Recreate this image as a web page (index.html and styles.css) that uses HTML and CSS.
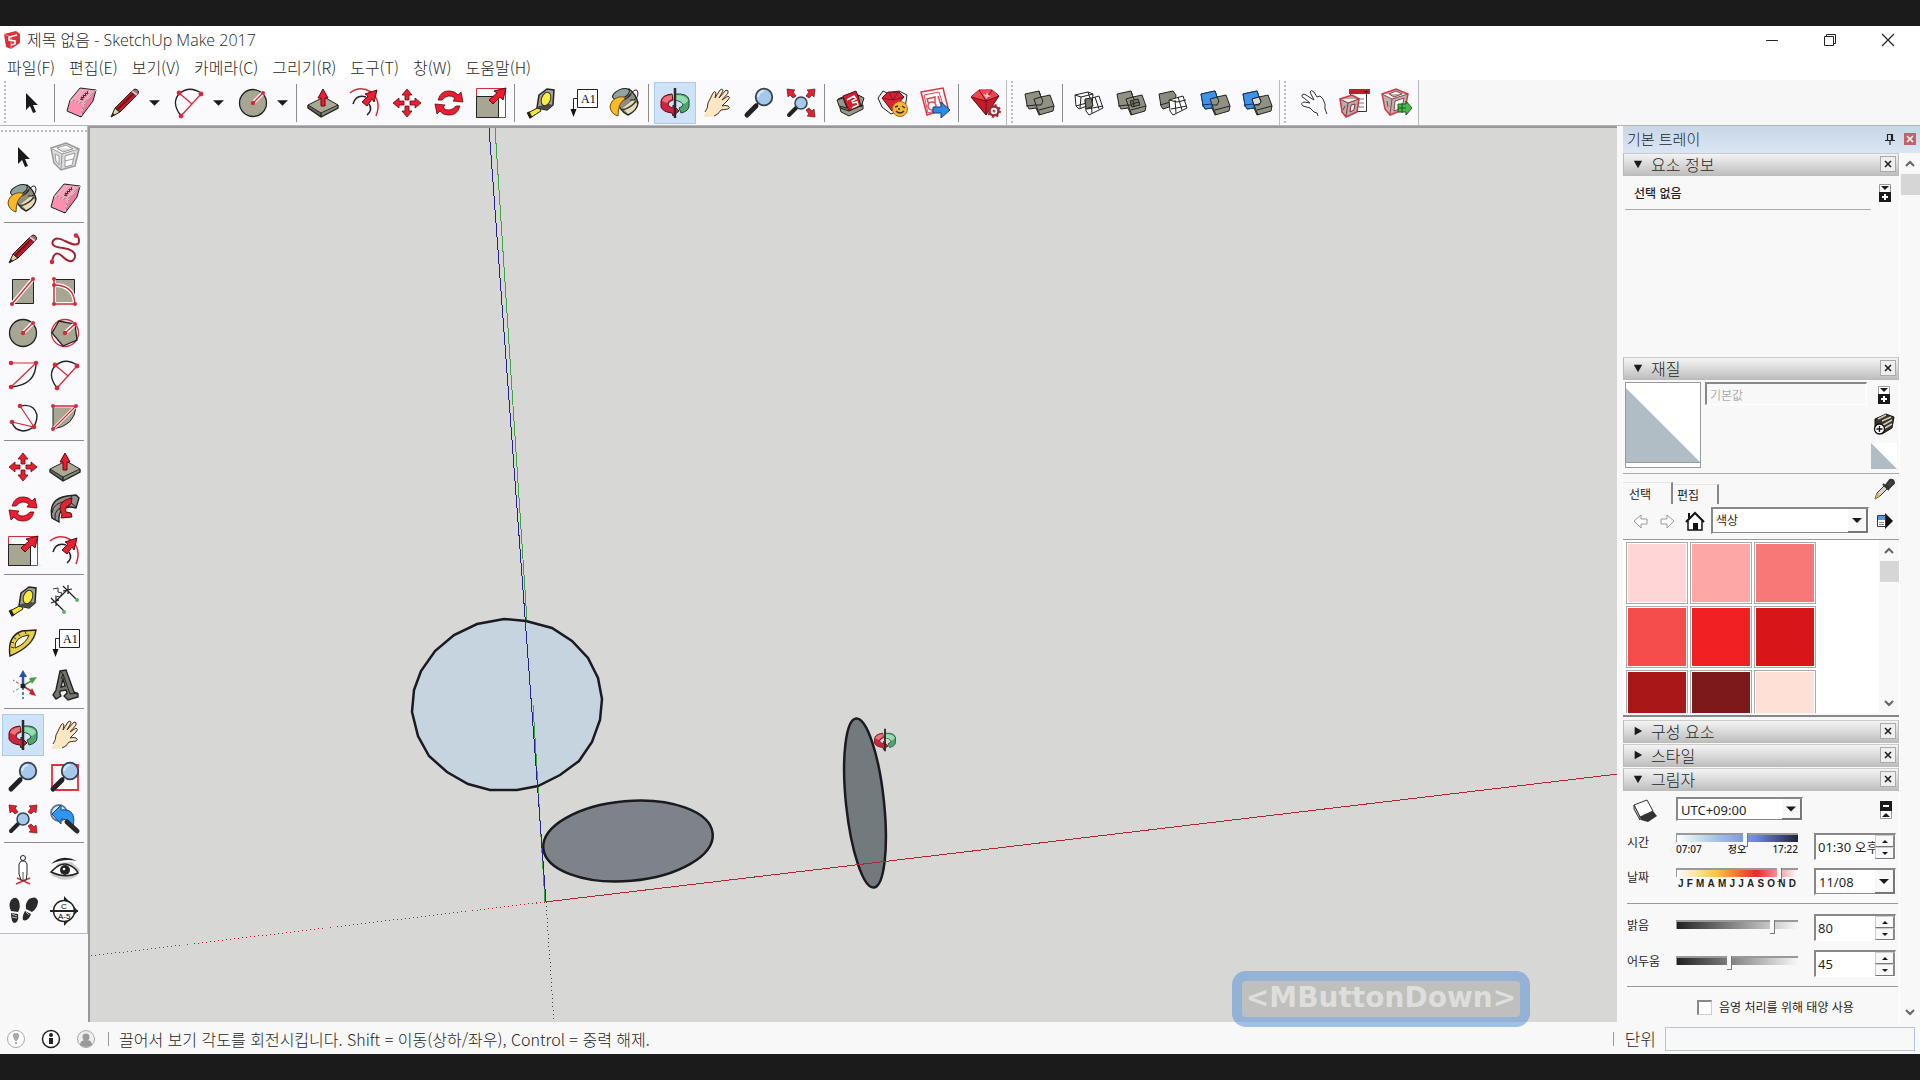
FILE: index.html
```html
<!DOCTYPE html>
<html lang="ko">
    <head>
        <meta charset="UTF-8" />
        <meta name="viewport" content="width=device-width, initial-scale=1.0" />
        <title>제목 없음 - SketchUp Make 2017</title>
        <link rel="stylesheet" href="styles.css">
    </head>
    <body>
        <!-- icons, all on a 32x32 grid -->
        <svg class="sprite" aria-hidden="true">
            <symbol id="select" viewBox="0 0 32 32"><path d="M11 6v17l4-4 3 7 3-1-3-7h5z" fill="#1a1a1a"/></symbol>
            <symbol id="eraser" viewBox="0 0 32 32">
                <g stroke="#222" stroke-linejoin="round"><path d="M15 1l16 2-12 14-14-4z" fill="#f4a6bd"/><path d="M5 13l14 4-3 13-14-6z" fill="#ff8fb0"/><path d="M31 3l-3 11-12 16 3-13z" fill="#f07a9c"/></g>
                <path d="M5 13l14 4 12-14M19 17l-3 12" stroke="#ffd9e4" fill="none"/>
                <path d="M15 12l3 1-2-3 3 1-1-3 3 1-1-3 3 1-1-3" stroke="#4a2030" fill="none"/>
            </symbol>
            <symbol id="pencil" viewBox="0 0 32 32">
                <path d="M2 30l4-9 5 4z" fill="#e3cf9d" stroke="#222"/><path d="M2 30l2-4 2 2z" fill="#222"/>
                <path d="M6 21L23 4l5 4-17 17z" fill="#c4202c" stroke="#222"/><path d="M8 23L25 6" stroke="#7a1018" stroke-width="2"/>
                <path d="M23 4l3-2q5 1 3 5l-1 1z" fill="#b06468" stroke="#222"/><path d="M23 4l5 4" stroke="#ccc" stroke-width="2"/>
            </symbol>
            <symbol id="arc" viewBox="0 0 32 32">
                <path d="M8 29Q-2 16 6 7q10-9 22-1" fill="none" stroke="#222" stroke-width="1.3"/>
                <path d="M8 29L28 7M6 6l13 11" stroke="#d32b3c" stroke-width="1.3"/>
                <g fill="#d32b3c"><circle cx="8" cy="29" r="2.4"/><circle cx="28" cy="7" r="2.4"/><circle cx="6" cy="6" r="2.4"/></g>
            </symbol>
            <symbol id="circle" viewBox="0 0 32 32">
                <circle cx="16" cy="16" r="13.5" fill="#a7a692" stroke="#222" stroke-width="1.3"/><path d="M16 16l10-10" stroke="#fff" stroke-width="4"/><path d="M16 16l10-10" stroke="#d32b3c" stroke-width="1.5"/>
                <g fill="#d32b3c"><circle cx="16" cy="16" r="2.2"/><circle cx="26" cy="6" r="2"/></g>
            </symbol>
            <symbol id="push" viewBox="0 0 32 32">
                <path d="M1 18l13 8v4L1 21z" fill="#66665a"/><path d="M31 18l-17 8v4l17-9z" fill="#89897a"/>
                <path d="M1 18v3l13 9 17-9v-3M14 26v4" fill="none" stroke="#222" stroke-width="1.400"/><path d="M1 18l16-8 14 8-17 8z" fill="#aaaa94" stroke="#222"/>
                <path d="M14 19v-8h-3l5-9 5 9h-3v8z" fill="#ed1c2e" stroke="#5a0c14"/>
            </symbol>
            <symbol id="offset" viewBox="0 0 32 32">
                <path d="M1 6Q11-2 22 5q11 9 5 24" fill="none" stroke="#d32b3c" stroke-width="1.5"/><path d="M4 17q3-10 13-7M20 17q4 6-2 11" fill="none" stroke="#222" stroke-width="1.5"/>
                <path d="M13 15l6-6-3-2 12-4-3 12-2-3-5 7z" fill="#ed1c2e" stroke="#5a0c14"/>
            </symbol>
            <symbol id="move" viewBox="0 0 32 32"><path d="M16 2l5 6h-3v5h-4V8h-3zM16 30l5-6h-3v-5h-4v5h-3zM2 16l6-5v3h5v4H8v3zM30 16l-6-5v3h-5v4h5v3z" fill="#ed1c2e" stroke="#5a0c14" stroke-width=".8"/></symbol>
            <symbol id="rotate" viewBox="0 0 32 32">
                <path id="half-turn" d="M5 13Q8 3 17 4q5 0 8 4l3-3 2 10-10-1 2-3q-7-5-13 2z" fill="#ed1c2e" stroke="#5a0c14" stroke-width=".8"/>
                <use href="#half-turn" transform="rotate(180 16 16)"/>
            </symbol>
            <symbol id="scale" viewBox="0 0 32 32">
                <path d="M1.500 1.500h29v29h-29z" fill="none" stroke="#d32b3c"/><path d="M1.500 9.500h22v21h-22z" fill="#a7a692" stroke="#222"/>
                <path d="M14 13l8-7-3-2 12-3-3 12-3-3-7 7z" fill="#ed1c2e" stroke="#5a0c14"/>
            </symbol>
            <symbol id="tape" viewBox="0 0 32 32">
                <path d="M3 26l11-6 2 4-11 7z" fill="#f3e43a" stroke="#222"/><path d="M3 25l3 6" stroke="#222" stroke-width="3"/>
                <path d="M14 8l8-6 7 1-1 15-6 5-10-2z" fill="#a3a39a" stroke="#222" stroke-width="1.5"/><path d="M12 21l10 2 6-5-4-1-10 2z" fill="#4d4d48"/>
                <ellipse cx="21" cy="12" rx="4.500" ry="7" fill="#f8ee3d" stroke="#333" transform="rotate(20 21 12)"/>
            </symbol>
            <symbol id="text" viewBox="0 0 32 32">
                <path d="M10.500 2.500h20v18h-20zM10 11.500H6.500V23" fill="#fff" stroke="#222"/><path d="M3.500 22h6l-3 8z" fill="#111"/>
                <text x="14" y="16" class="icon-text">A1</text>
            </symbol>
            <symbol id="bucket" viewBox="0 0 32 32">
                <path d="M5 9L20 2q7 5 9 14-1 8-10 12-8-3-14-19z" fill="#8f8d80" stroke="#222" stroke-width="1.400"/><path d="M14 21l10-8 4 4q-1 6-9 10z" fill="#e7dcb6"/>
                <path d="M10 14q8-1 12-7M13 23q9-2 14-9" stroke="#3c3c38" stroke-width="1.500" fill="none"/><ellipse cx="12" cy="7" rx="9" ry="4.500" transform="rotate(-24 12 7)" fill="#8fa3a0" stroke="#222"/>
                <path d="M19 10Q28-2 29 6q0 8-8 7" fill="none" stroke="#222"/><path d="M1 20q1-8 9-10 6-1 6 2-7 4-7 17-7-2-8-9z" fill="#fbb829" stroke="#6b4b10"/>
            </symbol>
            <symbol id="orbit" viewBox="0 0 32 32">
                <path d="M16 7q13-1 14 6v6q0 5-8 7l-2-5q4-1 4-4-2-3-8-4z" fill="#4fa66d" stroke="#1d4a2c"/><path d="M16 8q11 0 13 5-1 3-5 4-2-4-8-4z" fill="#96dcb0"/>
                <path d="M13 7Q3 8 2 14v6q2 5 11 6l1 3 6-5-6-6v3q-5-1-5-4 1-3 5-4z" fill="#d0243c" stroke="#5a0c14"/><path d="M13 8Q4 9 3 14l5 2q1-3 5-4z" fill="#e8747a"/>
                <path d="M16 1v30" stroke="#2a2a2a" stroke-width="2.500"/>
            </symbol>
            <symbol id="pan" viewBox="0 0 32 32">
                <path d="M2 30q5-7 5-14L12 6q2-3 3 0l-1 5 5-8q3-2 3 1l-4 7 7-8q3 0 2 3l-6 7 6-4q3 1 0 4l-6 6q3-1 6 0 3 2 0 3l-7 1q-4 6-12 7z" fill="#fde6c4"/>
                <path d="M4 25q3-4 3-9L12 6q2-3 3 0l-1 5 5-8q3-2 3 1l-4 7 7-8q3 0 2 3l-6 7 6-4q3 1 0 4l-6 6q3-1 6 0 3 2 0 3l-7 1q-3 5-7 6" fill="none" stroke="#3d3122"/>
            </symbol>
            <symbol id="zoom" viewBox="0 0 32 32">
                <path d="M4 28l9-9" stroke="#222" stroke-width="5" stroke-linecap="round"/><path d="M13 19l3-4" stroke="#222" stroke-width="2"/>
                <circle cx="21" cy="10" r="8.300" fill="#a6c8ea" stroke="#37424f" stroke-width="1.800"/><path d="M15 10q1-6 6-6" stroke="#d8e9f8" fill="none" stroke-width="2"/>
            </symbol>
            <symbol id="extents" viewBox="0 0 32 32">
                <path d="M4 28l7-7" stroke="#222" stroke-width="4" stroke-linecap="round"/><circle cx="16" cy="16" r="6" fill="#a6c8ea" stroke="#37424f" stroke-width="1.500"/>
                <path d="M2 2l8 1-2 2 3 4-3 2-3-3-2 2zM30 2l-8 1 2 2-3 4 3 2 3-3 2 2zM30 30l-8-1 2-2-3-4 3-2 3 3 2-2z" fill="#e4202f" stroke="#6a1018" stroke-width=".7"/>
            </symbol>
            <symbol id="warehouse" viewBox="0 0 32 32">
                <path d="M3 12l14-6 10 4v12l-14 6-8-7z" fill="#77736b" stroke="#222"/><path d="M8 9l13-5 6 14-13 6z" fill="#d81e2e" stroke="#501018"/>
                <path d="M2 13l6-2 4 10-8-2zM23 8l6 3-3 9zM5 21l9 3 14-6v4l-14 7-8-4z" fill="#9a968b" stroke="#222"/>
                <path d="M12 13l7-4 2 3-4 2 1 2 4-1 1 3-6 3" fill="none" stroke="#fff" stroke-width="1.500"/>
            </symbol>
            <symbol id="gem" viewBox="0 0 32 32">
                <path d="M2 10l8-7h13l7 6-13 19z" fill="#c51b2b" stroke="#4e0a12"/><path d="M2 10l8-7h13l7 6-13 5z" fill="#ee4650"/><path d="M10 3l7 11 6-11M2 10l15 4 13-5M17 14v13" fill="none" stroke="#7b101b"/><path d="M14 7l3 1 1-3 1 3 3 1-3 1-1 2z" fill="#fcc"/>
            </symbol>
            <symbol id="gem-face" viewBox="0 0 32 32">
                <path d="M1 11L6 4l4 2L22 4l8 4-2 13-14 6-9-7z" fill="#eee" stroke="#222"/><path d="M5 11l6-6h11l5 5-12 14z" fill="#d42534" stroke="#501018"/><path d="M5 11l11 2 11-3M12 5l4 8 5-8" fill="none" stroke="#8b111e"/>
                <circle cx="23" cy="22" r="7.500" fill="#f7b733" stroke="#a56b10"/><path d="M18 20l3-1M25 19l3 2M19 24q4 4 8 0M22 21v2" stroke="#333" fill="none" stroke-width="1.500"/>
            </symbol>
            <symbol id="layout" viewBox="0 0 32 32">
                <path d="M2 5l22-4 5 20-21 7z" fill="#fff" stroke="#d83343" stroke-width="1.500"/><path d="M5 8l15-3 5 16-16 5z" fill="none" stroke="#dc4653"/><path d="M8 12l8-2v6l-6 2zM19 9l3 9" fill="none" stroke="#dc4653" stroke-width="1.500"/><circle cx="13" cy="19" r="4" fill="#fff" stroke="#dc4653" stroke-width="1.500"/>
                <path d="M14 20h8v-5l9 8-9 8v-5h-8z" fill="#2d8be6" stroke="#153e74"/>
            </symbol>
            <symbol id="gem-gear" viewBox="0 0 32 32">
                <use href="#gem"/><circle cx="25" cy="24" r="4.500" fill="#fff" stroke="#9d2b35" stroke-width="2.500"/><circle cx="25" cy="24" r="6" fill="none" stroke="#9d2b35" stroke-width="2" stroke-dasharray="2 2.700"/><circle cx="25" cy="24" r="1.500" fill="#b84b55"/>
            </symbol>
            <symbol id="shell" viewBox="0 0 32 32">
                <g fill="#919183" stroke="#222"><path d="M2 7l14-3 2 6 9-2 4 11-1 5-14 4-3-7-7 1-2-4z"/><path d="M16 4l2 6-7 2 2 6h5l2-4-2-4M3 19l10-1M13 18l4 10M16 23l15-4" fill="none"/></g>
            </symbol>
            <symbol id="intersect" viewBox="0 0 32 32">
                <g fill="none" stroke="#222"><path d="M2 8l13-3 4 12-13 5-3-3zM3 19l14-4M2 8l6 2 12-3M8 10l-1 11M15 5l5 2-1 11"/><path d="M12 13l14-4 4 12-14 7-3-4zM14 22l16-3M22 10l4 12M18 14l1 12"/><path d="M12 12l6-1 2 8-7 3z" fill="#77776b"/></g>
            </symbol>
            <symbol id="union" viewBox="0 0 32 32"><use href="#shell"/><path d="M15 14l8-2 2 6-8 2zM18 14l1 5M17 17l7-2" stroke="#222" fill="#77776b"/></symbol>
            <symbol id="subtract" viewBox="0 0 32 32">
                <g stroke="#222"><path d="M2 7l14-3 3 4-1 10-12 4-2-3z" fill="#8b8b7d"/><path d="M3 18l14-4" fill="none"/><path d="M12 13l14-4 4 12-14 7-3-4z" fill="#fff"/><path d="M14 22l16-3M21 10l4 13M18 13l1 13M12 13l8 2 9-2" fill="none"/></g>
            </symbol>
            <symbol id="trim" viewBox="0 0 32 32"><use href="#shell"/><path d="M2 7l14-3 2 6-7 2 2 6v3l-7 1-2-4z" fill="#3e92e8" stroke="#16365c"/><path d="M3 18l10-1" stroke="#16365c"/></symbol>
            <symbol id="split" viewBox="0 0 32 32"><use href="#trim"/><path d="M11 12l7-2 2 5-2 2-5 1z" fill="#ddd" stroke="#222"/></symbol>
            <symbol id="touch" viewBox="0 0 32 32"><path d="M6 8q2-2 4 0l8 5-4-8q1-3 4 0l3 5 3-1 3 3q3 5 2 10l2 5M6 8q-1 2 2 3l6 5-6-1q-4 1-1 4l7 2 4 4 3 1 1 3" fill="none" stroke="#333"/></symbol>
            <symbol id="component-menu" viewBox="0 0 32 32">
                <path d="M12.500 3.500h16v21h-16z" fill="#fff" stroke="#333"/><path d="M20 12h6M20 16h6M20 20h6" stroke="#777"/><path d="M11 2h21v5H11z" fill="#c31d2b"/><path d="M26 4h4l-2 2z" fill="#300"/>
                <path d="M2 12l12-4 7 4-2 13-11 5-4-5z" fill="#b5ada8" stroke="#c93443" stroke-width="1.500"/><path d="M2 12l8 4 11-4M10 16l-2 13M7 19l-2 4M13 18l4-1-1 6-4 2z" stroke="#8e2d38" fill="#eee"/>
            </symbol>
            <symbol id="component-go" viewBox="0 0 32 32">
                <path d="M2 7l14-5 12 5-3 15-15 6-5-6z" fill="#bcb3ae" stroke="#d13c4a" stroke-width="1.500"/><path d="M2 7l10 5 16-5M12 12l-2 15M7 14l1 6M9 7l7-3 6 3-8 3zM15 14l9-3-2 10-8 3z" stroke="#94404a" fill="#fff"/>
                <path d="M18 17h8v-3l6 7-6 7v-3h-8z" fill="#49b749" stroke="#1c5a20"/><path d="M22 16v10M18 21h8" stroke="#1c5a20"/>
            </symbol>
            <symbol id="component" viewBox="0 0 32 32">
                <path d="M2 7l15-5 13 6-4 17-14 4-7-7z" fill="#ddd" stroke="#999" stroke-width="1.500"/><path d="M2 7l11 6 17-5M13 13l-1 16M8 7l9-3 7 4-10 3zM6 13l4 2v9l-3-4zM16 15l10-3-3 12-7 2zM16 20l8-2" fill="#fff" stroke="#999"/>
            </symbol>
            <symbol id="freehand" viewBox="0 0 32 32"><path d="M3 29q2-13 10-6 10 10 13 1 1-7-12-9-13-1-10-7 3-5 12 0 14 7 14 0 0-5-3-5" fill="none" stroke="#a5202e" stroke-width="2"/><circle cx="3" cy="29" r="2.300" fill="#d32b3c"/><circle cx="27" cy="2.500" r="2.300" fill="#d32b3c"/></symbol>
            <symbol id="rect" viewBox="0 0 32 32"><path d="M5.500 4.500h21v24h-21z" fill="#a7a692" stroke="#222"/><path d="M5 29L26 4" stroke="#fff" stroke-width="4"/><path d="M5 29L26 4" stroke="#d32b3c" stroke-width="1.500"/><circle cx="5" cy="29" r="2" fill="#d32b3c"/><circle cx="26" cy="4" r="2" fill="#d32b3c"/></symbol>
            <symbol id="rot-rect" viewBox="0 0 32 32"><path d="M5.500 4.500h20v24h-20z" fill="#a7a692" stroke="#222"/><path d="M5 4v25h21Q25 10 5 10" fill="none" stroke="#fff" stroke-width="4"/><path d="M5 4v25h21Q25 10 5 10" fill="none" stroke="#d32b3c" stroke-width="1.500"/><g fill="#d32b3c"><circle cx="5" cy="4" r="2"/><circle cx="5" cy="10" r="2"/><circle cx="5" cy="29" r="2"/><circle cx="26" cy="29" r="2"/></g></symbol>
            <symbol id="polygon" viewBox="0 0 32 32"><circle cx="16" cy="16" r="13.500" fill="#fff" stroke="#d32b3c" stroke-width="1.300"/><path d="M10 4l16 3 2 16-14 6L3 16z" fill="#a7a692" stroke="#222" stroke-width="1.300"/><path d="M16 16l10-9" stroke="#fff" stroke-width="4"/><path d="M16 16l10-9" stroke="#d32b3c" stroke-width="1.500"/><circle cx="16" cy="16" r="2.200" fill="#d32b3c"/><circle cx="26" cy="7" r="2" fill="#d32b3c"/></symbol>
            <symbol id="arc2" viewBox="0 0 32 32"><path d="M4 28Q29 26 29 4" fill="none" stroke="#222" stroke-width="1.400"/><path d="M4 28L29 4H4" fill="none" stroke="#d32b3c" stroke-width="1.200"/><g fill="#d32b3c"><circle cx="4" cy="4" r="2.300"/><circle cx="29" cy="4" r="2.300"/><circle cx="4" cy="28" r="2.300"/></g></symbol>
            <symbol id="arc3" viewBox="0 0 32 32"><path d="M13 5q14-3 17 9 0 15-14 16-9-1-11-9" fill="none" stroke="#222" stroke-width="1.400"/><path d="M13 5l14 21-22-5" fill="none" stroke="#d32b3c" stroke-width="1.200"/><g fill="#d32b3c"><circle cx="13" cy="5" r="2.300"/><circle cx="5" cy="21" r="2.300"/><circle cx="27" cy="26" r="2.300"/></g></symbol>
            <symbol id="pie" viewBox="0 0 32 32"><path d="M4 28V5h23q-1 20-23 23z" fill="#a7a692" stroke="#222"/><path d="M4 28L27 5H4" stroke="#fff" stroke-width="3" fill="none"/><path d="M4 28L27 5H4" stroke="#d32b3c" stroke-width="1.300" fill="none"/><g fill="#d32b3c"><circle cx="4" cy="5" r="2"/><circle cx="27" cy="5" r="2"/><circle cx="4" cy="28" r="2"/></g></symbol>
            <symbol id="follow" viewBox="0 0 32 32">
                <path d="M10 29l-7-4Q-1 6 18 3l9-1 3 3-3 10-5-1q-13-1-12 15z" fill="#92928a" stroke="#222" stroke-width="1.400"/><path d="M3 20q1-11 17-12l3-5M6 27q-2-14 15-14M20 8l7 6" fill="none" stroke="#222"/>
                <path d="M23 5q-13 2-12 12l2 4-1 4 11-1-1-4-5-1q-2-5 5-8z" fill="#dc2632" stroke="#5a0c14"/>
            </symbol>
            <symbol id="dimension" viewBox="0 0 32 32"><path d="M6 17L18 5M2 13l13 13M14 1l13 13M2 18l8-3M14 6l9-2M7 12v9M19 0v9" stroke="#222" stroke-width="1.200"/><path d="M4 4l5-1 0 4 4 1-2 4-5-1" fill="none" stroke="#333"/><circle cx="15" cy="27" r="2" fill="#58b868"/><circle cx="28" cy="15" r="2" fill="#58b868"/></symbol>
            <symbol id="protractor" viewBox="0 0 32 32"><path d="M3 29Q0 9 15 4l14-1Q27 19 3 29z" fill="#e8cf4b" stroke="#222" stroke-width="1.400"/><path d="M8 21Q7 10 22 8q-3 9-14 13z" fill="#fbf6df" stroke="#222"/><path d="M4 20l3 1M4 15l3 1M6 10l3 2M11 6l2 3M18 4l1 3" stroke="#333"/></symbol>
            <symbol id="axes" viewBox="0 0 32 32"><path d="M16 17V6" stroke="#2455a4" stroke-width="2.500"/><path d="M12 8l4-7 4 7z" fill="#2455a4"/><path d="M16 17l8-5" stroke="#4a9e4a" stroke-width="1.500"/><path d="M22 9l8-1-5 7z" fill="#4a9e4a"/><path d="M16 17l8 5" stroke="#c22330" stroke-width="1.500"/><path d="M22 25l7 2-4-8z" fill="#c22330"/><path d="M16 18v12" stroke="#2455a4" stroke-width="1.500" stroke-dasharray="3 2"/><path d="M16 17L6 11" stroke="#c22330" stroke-dasharray="3 2"/><path d="M16 17L6 23" stroke="#4a9e4a" stroke-dasharray="3 2"/><circle cx="16" cy="17" r="2.500" fill="#222"/></symbol>
            <symbol id="text3d" viewBox="0 0 32 32"><path d="M11 2l6-1 8 22 4 2v3l-10 3-4-4 3-3-1-3-6 1v3l1 2-5 3-3-4 3-5zM14 10l-2 8 4-1z" fill="#75756d" stroke="#222" stroke-width="1.400" fill-rule="evenodd"/><path d="M11 2l3 3 7 20 8-1M14 5l-2 5" fill="none" stroke="#222"/></symbol>
            <symbol id="zoom-window" viewBox="0 0 32 32"><path d="M3 4h26v25H3z" fill="none" stroke="#e4303e" stroke-width="1.800"/><use href="#zoom"/></symbol>
            <symbol id="previous" viewBox="0 0 32 32"><circle cx="10" cy="10" r="8" fill="#d7e6f4" stroke="#61798f" stroke-width="1.800"/><path d="M3 11l9-9v5q16-2 12 17l-3-1q1-7-9-7v5z" fill="#3194ee" stroke="#164a86"/><path d="M18 19l10 9" stroke="#2a2a2a" stroke-width="5" stroke-linecap="round"/></symbol>
            <symbol id="camera-man" viewBox="0 0 32 32"><path d="M9 31l14-6M10 25l13 6" stroke="#dc3341" stroke-width="1.500"/><circle cx="16" cy="5" r="2.500" fill="#fff" stroke="#222"/><path d="M14 8l-2 3v10l2 6h5l1-6V11l-2-3z" fill="#fff" stroke="#222"/><path d="M16 19v7" stroke="#555"/></symbol>
            <symbol id="look" viewBox="0 0 32 32"><path d="M2 22q14 9 26 1l3-6-8-8-14 1z" fill="#ccc"/><path d="M2 11Q13 0 28 8q-13-3-26 3z" fill="#222"/><path d="M2 19Q12 8 20 12q7 3 9 8-12 6-27-1z" fill="#fff" stroke="#222" stroke-width="1.500"/><circle cx="16" cy="17" r="5" fill="#222"/><circle cx="15" cy="16" r="1.300" fill="#fff"/></symbol>
            <symbol id="walk" viewBox="0 0 32 32"><g fill="#2a2a2a"><path d="M4 5q5-5 8 1 2 7-1 11l-7-1Q1 10 4 5zM4 18l7 1q1 8-3 9-4 0-4-10z"/><path d="M22 4q7-4 9 2 0 7-6 11l-6-3Q18 8 22 4zM18 16l6 3q-3 8-8 6-1-4 2-9z"/></g><path d="M5 19l5 2M5 22l5 1M19 17l3 3" stroke="#bbb"/></symbol>
            <symbol id="section" viewBox="0 0 32 32"><path d="M15 3V1l14 15-14 15z" fill="#222"/><circle cx="15" cy="16" r="10.500" fill="#fff" stroke="#222" stroke-width="1.400"/><path d="M1 16h28" stroke="#222" stroke-width="2"/><text x="12" y="14" class="tiny-text">C</text><text x="9" y="24" class="tiny-text">A-5</text></symbol>
            <symbol id="caret" viewBox="0 0 12 12"><path d="M1 4h10L6 9z" fill="#1a1a1a"/></symbol>
            <symbol id="spin-up" viewBox="0 0 12 12"><path d="M3 8h6L6 5z" fill="#1a1a1a"/></symbol>
            <symbol id="spin-down" viewBox="0 0 12 12"><path d="M3 5h6L6 8z" fill="#1a1a1a"/></symbol>
            <symbol id="open" viewBox="0 0 12 12"><path d="M1 2h10l-5 9z" fill="#1a1a1a"/></symbol>
            <symbol id="closed" viewBox="0 0 12 12"><path d="M2 1v10l9-5z" fill="#1a1a1a"/></symbol>
            <symbol id="cross" viewBox="0 0 12 12"><path d="M3 3l6 6M9 3l-6 6" stroke="currentColor" stroke-width="1.600"/></symbol>
            <symbol id="up" viewBox="0 0 12 12"><path d="M2 8l4-4 4 4" fill="none" stroke="#666" stroke-width="2"/></symbol>
            <symbol id="down" viewBox="0 0 12 12"><path d="M2 4l4 4 4-4" fill="none" stroke="#666" stroke-width="2"/></symbol>
            <symbol id="more" viewBox="0 0 12 18"><path d="M.5.5h11v17H.5z" fill="#fff" stroke="#999"/><path d="M2 2h8L6 6zM0 8h12v10H0z" fill="#1a1a1a"/><path d="M6 10v6M3 13h6" stroke="#fff" stroke-width="2"/></symbol>
            <symbol id="less" viewBox="0 0 12 18"><path d="M.5.5h11v17H.5z" fill="#fff" stroke="#999"/><path d="M2 16h8l-4-4zM0 0h12v10H0z" fill="#1a1a1a"/><path d="M3 5h6" stroke="#fff" stroke-width="2"/></symbol>
        </svg>

        <header class="titlebar">
            <svg class="logo" viewBox="0 0 18 18"><path d="M1 3l12-3 4 3v9l-9 6-5-2z" fill="#d9303a"/><path d="M1 3l7 3v12" fill="none" stroke="#f08a8f"/><path d="M14 4L6 6v3l6 1v3l-4 1" fill="none" stroke="#fff" stroke-width="1.500"/></svg>
            <h1>제목 없음 - SketchUp Make 2017</h1>
            <div class="window-buttons">
                <button aria-label="최소화"><svg viewBox="0 0 14 14"><path d="M1 7.500h12" stroke="#222"/></svg></button>
                <button aria-label="이전 크기로"><svg viewBox="0 0 14 14"><path d="M1.500 3.500h9v9h-9zM3.500 3V1.500h9v9H11" fill="none" stroke="#222"/></svg></button>
                <button aria-label="닫기"><svg viewBox="0 0 14 14"><path d="M1 1l12 12M13 1L1 13" stroke="#222" stroke-width="1.200"/></svg></button>
            </div>
        </header>

        <nav class="menubar">
            <a href="#">파일(F)</a><a href="#">편집(E)</a><a href="#">보기(V)</a><a href="#">카메라(C)</a><a href="#">그리기(R)</a><a href="#">도구(T)</a><a href="#">창(W)</a><a href="#">도움말(H)</a>
        </nav>

        <div class="toolbars">
            <div class="toolbar">
                <button class="tool" aria-label="선택"><svg><use href="#select"/></svg></button>
                <span class="sep"></span>
                <button class="tool" aria-label="지우개"><svg><use href="#eraser"/></svg></button>
                <button class="tool drop" aria-label="선"><svg><use href="#pencil"/></svg><svg class="caret"><use href="#caret"/></svg></button>
                <button class="tool drop" aria-label="호"><svg><use href="#arc"/></svg><svg class="caret"><use href="#caret"/></svg></button>
                <button class="tool drop" aria-label="원"><svg><use href="#circle"/></svg><svg class="caret"><use href="#caret"/></svg></button>
                <span class="sep"></span>
                <button class="tool" aria-label="밀기/끌기"><svg><use href="#push"/></svg></button>
                <button class="tool" aria-label="오프셋"><svg><use href="#offset"/></svg></button>
                <button class="tool" aria-label="이동"><svg><use href="#move"/></svg></button>
                <button class="tool" aria-label="회전"><svg><use href="#rotate"/></svg></button>
                <button class="tool" aria-label="배율"><svg><use href="#scale"/></svg></button>
                <span class="sep"></span>
                <button class="tool" aria-label="줄자"><svg><use href="#tape"/></svg></button>
                <button class="tool" aria-label="텍스트"><svg><use href="#text"/></svg></button>
                <button class="tool" aria-label="페인트통"><svg><use href="#bucket"/></svg></button>
                <span class="sep"></span>
                <button class="tool active" aria-label="궤도"><svg><use href="#orbit"/></svg></button>
                <button class="tool" aria-label="화면 이동"><svg><use href="#pan"/></svg></button>
                <button class="tool" aria-label="확대/축소"><svg><use href="#zoom"/></svg></button>
                <button class="tool" aria-label="범위 확대"><svg><use href="#extents"/></svg></button>
                <span class="sep"></span>
                <button class="tool" aria-label="3D Warehouse"><svg><use href="#warehouse"/></svg></button>
                <button class="tool" aria-label="Extension Warehouse"><svg><use href="#gem-face"/></svg></button>
                <button class="tool" aria-label="LayOut"><svg><use href="#layout"/></svg></button>
                <span class="sep"></span>
                <button class="tool" aria-label="확장 프로그램 관리자"><svg><use href="#gem-gear"/></svg></button>
            </div>
            <div class="toolbar">
                <button class="tool" aria-label="외부 셸"><svg><use href="#shell"/></svg></button>
                <span class="sep"></span>
                <button class="tool" aria-label="교차"><svg><use href="#intersect"/></svg></button>
                <button class="tool" aria-label="결합"><svg><use href="#union"/></svg></button>
                <button class="tool" aria-label="빼기"><svg><use href="#subtract"/></svg></button>
                <button class="tool" aria-label="트림"><svg><use href="#trim"/></svg></button>
                <button class="tool" aria-label="분할"><svg><use href="#split"/></svg></button>
            </div>
            <div class="toolbar">
                <button class="tool" aria-label="상호 작용"><svg><use href="#touch"/></svg></button>
                <button class="tool" aria-label="구성 요소 옵션"><svg><use href="#component-menu"/></svg></button>
                <button class="tool" aria-label="구성 요소 속성"><svg><use href="#component-go"/></svg></button>
            </div>
        </div>

        <main class="workspace">
            <aside class="palette">
                <div class="tools">
                    <button class="tool" aria-label="선택"><svg><use href="#select"/></svg></button>
                    <button class="tool" aria-label="구성 요소 만들기"><svg><use href="#component"/></svg></button>
                    <button class="tool" aria-label="페인트통"><svg><use href="#bucket"/></svg></button>
                    <button class="tool" aria-label="지우개"><svg><use href="#eraser"/></svg></button>
                    <span class="sep"></span>
                    <button class="tool" aria-label="선"><svg><use href="#pencil"/></svg></button>
                    <button class="tool" aria-label="자유형"><svg><use href="#freehand"/></svg></button>
                    <button class="tool" aria-label="직사각형"><svg><use href="#rect"/></svg></button>
                    <button class="tool" aria-label="회전한 직사각형"><svg><use href="#rot-rect"/></svg></button>
                    <button class="tool" aria-label="원"><svg><use href="#circle"/></svg></button>
                    <button class="tool" aria-label="다각형"><svg><use href="#polygon"/></svg></button>
                    <button class="tool" aria-label="호"><svg><use href="#arc2"/></svg></button>
                    <button class="tool" aria-label="2점 호"><svg><use href="#arc"/></svg></button>
                    <button class="tool" aria-label="3점 호"><svg><use href="#arc3"/></svg></button>
                    <button class="tool" aria-label="파이"><svg><use href="#pie"/></svg></button>
                    <span class="sep"></span>
                    <button class="tool" aria-label="이동"><svg><use href="#move"/></svg></button>
                    <button class="tool" aria-label="밀기/끌기"><svg><use href="#push"/></svg></button>
                    <button class="tool" aria-label="회전"><svg><use href="#rotate"/></svg></button>
                    <button class="tool" aria-label="따라가기"><svg><use href="#follow"/></svg></button>
                    <button class="tool" aria-label="배율"><svg><use href="#scale"/></svg></button>
                    <button class="tool" aria-label="오프셋"><svg><use href="#offset"/></svg></button>
                    <span class="sep"></span>
                    <button class="tool" aria-label="줄자"><svg><use href="#tape"/></svg></button>
                    <button class="tool" aria-label="치수"><svg><use href="#dimension"/></svg></button>
                    <button class="tool" aria-label="각도기"><svg><use href="#protractor"/></svg></button>
                    <button class="tool" aria-label="텍스트"><svg><use href="#text"/></svg></button>
                    <button class="tool" aria-label="축"><svg><use href="#axes"/></svg></button>
                    <button class="tool" aria-label="3D 텍스트"><svg><use href="#text3d"/></svg></button>
                    <span class="sep"></span>
                    <button class="tool active" aria-label="궤도"><svg><use href="#orbit"/></svg></button>
                    <button class="tool" aria-label="화면 이동"><svg><use href="#pan"/></svg></button>
                    <button class="tool" aria-label="확대/축소"><svg><use href="#zoom"/></svg></button>
                    <button class="tool" aria-label="창 확대"><svg><use href="#zoom-window"/></svg></button>
                    <button class="tool" aria-label="범위 확대"><svg><use href="#extents"/></svg></button>
                    <button class="tool" aria-label="이전"><svg><use href="#previous"/></svg></button>
                    <span class="sep"></span>
                    <button class="tool" aria-label="카메라 배치"><svg><use href="#camera-man"/></svg></button>
                    <button class="tool" aria-label="둘러보기"><svg><use href="#look"/></svg></button>
                    <button class="tool" aria-label="걷기"><svg><use href="#walk"/></svg></button>
                    <button class="tool" aria-label="단면"><svg><use href="#section"/></svg></button>
                </div>
            </aside>

            <section class="viewport">
                <svg class="scene">
                    <path d="M405 0l32 493" class="axis green"/>
                    <path d="M414 491l22 2 26 7 20 13 16 17 10 20 4 21-2 21-8 22-13 19-19 14-22 11-21 4h-27l-22-6-21-12-18-16-11-20-6-24 2-22 7-19 14-20 19-16 23-11z" class="face light"/>
                    <path d="M443 577l12 197" class="axis green"/>
                    <ellipse cx="538" cy="713" rx="85" ry="40" transform="rotate(-5 538 713)" class="face"/>
                    <ellipse cx="775" cy="675" rx="19" ry="85" transform="rotate(-6 775 675)" class="face side"/>
                    <path d="M399 0l57 774" class="axis blue"/>
                    <path d="M455 774l1073-128" class="axis red"/>
                    <path d="M455 774L0 828" class="axis red dotted"/>
                    <path d="M456 774l8 120" class="axis dark dotted"/>
                    <use href="#orbit" x="783" y="599" width="24" height="26"/>
                </svg>
                <div class="keycast">&lt;MButtonDown&gt;</div>
            </section>

            <aside class="tray">
                <header class="tray-title">
                    <h2>기본 트레이</h2>
                    <button aria-label="고정"><svg viewBox="0 0 12 12"><path d="M3.500 7V1.500h5V7M1 7.500h10M6 8v4M7.500 2v5" fill="none" stroke="#222" stroke-width="1.200"/></svg></button>
                    <button class="tray-close" aria-label="닫기"><svg><use href="#cross"/></svg></button>
                </header>
                <div class="tray-body">
                    <div class="panels">
                        <h3 class="panel-head"><svg><use href="#open"/></svg>요소 정보<button aria-label="닫기"><svg><use href="#cross"/></svg></button></h3>
                        <div class="entity">
                            <span>선택 없음</span>
                            <button class="plain" aria-label="자세히"><svg class="toggle"><use href="#more"/></svg></button>
                        </div>

                        <h3 class="panel-head"><svg><use href="#open"/></svg>재질<button aria-label="닫기"><svg><use href="#cross"/></svg></button></h3>
                        <div class="material">
                            <svg class="preview" viewBox="0 0 74 84"><path d="M0 0h74v84H0z" fill="#fff"/><path d="M0 5v74h74z" fill="#b0bdc5"/><path d="M0 79.500h74" stroke="#999"/></svg>
                            <input class="sunken" type="text" value="기본값" aria-label="재질 이름" disabled>
                            <div class="material-side">
                                <button class="plain" aria-label="보조 창"><svg class="toggle"><use href="#more"/></svg></button>
                                <button class="plain" aria-label="재질 만들기"><svg class="medium" viewBox="0 0 22 22"><path d="M2 6l11-5 8 3-2 11-10 6-7-5z" fill="#39352e" stroke="#111"/><path d="M5 6l8-4M9 8l9-4M10 12l9-5M10 16l9-5" stroke="#cfc9b4" stroke-width="1.500"/><circle cx="6.500" cy="16" r="5" fill="#fff" stroke="#111" stroke-width="1.300"/><path d="M6.500 13v6M3.500 16h6" stroke="#111" stroke-width="1.300"/></svg></button>
                                <button class="plain" aria-label="기본 재질"><svg class="default-mat" viewBox="0 0 26 26"><path d="M0 0h26v26H0z" fill="#fff"/><path d="M0 0v26h26z" fill="#b0bdc5"/></svg></button>
                            </div>
                        </div>
                        <div class="tabs">
                            <button class="tab current">선택</button><button class="tab">편집</button>
                            <button class="plain dropper" aria-label="샘플 페인트"><svg class="medium" viewBox="0 0 22 22"><path d="M2 21l2-6 8-8 3 3-8 8z" fill="#ddd4c8" stroke="#333"/><path d="M2 21l2-6 3 3z" fill="#e2b04a"/><path d="M10 6l6 6M13 7l4-5q4-1 4 3l-5 5z" fill="#444" stroke="#333" stroke-width="2"/></svg></button>
                        </div>
                        <div class="browse">
                            <button class="plain" aria-label="뒤로"><svg viewBox="0 0 16 16"><path d="M1 8l7-6v4h6v5H8v4z" fill="#fff" stroke="#999"/></svg></button>
                            <button class="plain" aria-label="앞으로"><svg viewBox="0 0 16 16"><path d="M15 8L8 2v4H2v5h6v4z" fill="#fff" stroke="#999"/></svg></button>
                            <button class="plain" aria-label="모델 내"><svg class="home" viewBox="0 0 20 20"><path d="M3 10v9h14v-9" fill="#fff" stroke="#111" stroke-width="1.500"/><path d="M1 11l9-9 9 9M4 8V2" fill="none" stroke="#111" stroke-width="2"/><path d="M8 12h5v7H8z" fill="#111"/></svg></button>
                            <span class="dropdown sunken"><select aria-label="재질 모음"><option>색상</option></select><svg class="raised"><use href="#caret"/></svg></span>
                            <button class="plain" aria-label="세부 정보"><svg viewBox="0 0 16 16"><path d="M8 0l8 8-8 8z" fill="#111"/><path d="M.5 2.500h8v11h-8z" fill="#fff" stroke="#335"/><path d="M1 3h7v4H1z" fill="#5c93dc"/><path d="M2 9.500h5M2 11.500h5" stroke="#888"/></svg></button>
                        </div>
                        <div class="colors">
                            <div class="swatches">
                                <button class="swatch c1" aria-label="색상 A01"></button><button class="swatch c2" aria-label="색상 A02"></button><button class="swatch c3" aria-label="색상 A03"></button>
                                <button class="swatch c4" aria-label="색상 A04"></button><button class="swatch c5" aria-label="색상 A05"></button><button class="swatch c6" aria-label="색상 A06"></button>
                                <button class="swatch c7" aria-label="색상 A07"></button><button class="swatch c8" aria-label="색상 A08"></button><button class="swatch c9" aria-label="색상 B01"></button>
                            </div>
                            <div class="scrollbar"><svg><use href="#up"/></svg><span class="thumb"></span><svg><use href="#down"/></svg></div>
                        </div>

                        <h3 class="panel-head"><svg><use href="#closed"/></svg>구성 요소<button aria-label="닫기"><svg><use href="#cross"/></svg></button></h3>
                        <h3 class="panel-head"><svg><use href="#closed"/></svg>스타일<button aria-label="닫기"><svg><use href="#cross"/></svg></button></h3>
                        <h3 class="panel-head"><svg><use href="#open"/></svg>그림자<button aria-label="닫기"><svg><use href="#cross"/></svg></button></h3>
                        <div class="shadows">
                            <div class="shadow-row zone">
                                <button class="plain" aria-label="그림자 표시"><svg class="cube" viewBox="0 0 24 24"><path d="M1 6l13-5 6 11-13 6z" fill="#fff" stroke="#333"/><path d="M20 12l4 5-9 6-7-2-1-3z" fill="#333"/><path d="M1 6v4l6 11v-3z" fill="#ddd" stroke="#333"/></svg></button>
                                <span class="dropdown sunken"><select aria-label="시간대"><option>UTC+09:00</option></select><svg class="raised"><use href="#caret"/></svg></span>
                                <button class="plain" aria-label="간단히"><svg class="toggle"><use href="#less"/></svg></button>
                            </div>
                            <div class="shadow-row">
                                <label for="time">시간</label>
                                <div class="track"><input id="time" class="time" type="range" min="0" max="100" value="57"><div class="ticks"><span>07:07</span><span>정오</span><span>17:22</span></div></div>
                                <div class="spin sunken"><input type="text" value="01:30 오후" aria-label="시간 값"><button aria-label="늘리기"><svg><use href="#spin-up"/></svg></button><button aria-label="줄이기"><svg><use href="#spin-down"/></svg></button></div>
                            </div>
                            <div class="shadow-row">
                                <label for="date">날짜</label>
                                <div class="track"><input id="date" class="date" type="range" min="0" max="100" value="86"><div class="ticks months"><span>J</span><span>F</span><span>M</span><span>A</span><span>M</span><span>J</span><span>J</span><span>A</span><span>S</span><span>O</span><span>N</span><span>D</span></div></div>
                                <span class="dropdown sunken"><select aria-label="날짜 값"><option>11/08</option></select><svg class="raised"><use href="#caret"/></svg></span>
                            </div>
                            <hr>
                            <div class="shadow-row level">
                                <label for="light">밝음</label>
                                <div class="track"><input id="light" type="range" min="0" max="100" value="80"></div>
                                <div class="spin sunken"><input type="text" value="80" aria-label="밝음 값"><button aria-label="늘리기"><svg><use href="#spin-up"/></svg></button><button aria-label="줄이기"><svg><use href="#spin-down"/></svg></button></div>
                            </div>
                            <div class="shadow-row level">
                                <label for="dark">어두움</label>
                                <div class="track"><input id="dark" type="range" min="0" max="100" value="43"></div>
                                <div class="spin sunken"><input type="text" value="45" aria-label="어두움 값"><button aria-label="늘리기"><svg><use href="#spin-up"/></svg></button><button aria-label="줄이기"><svg><use href="#spin-down"/></svg></button></div>
                            </div>
                            <hr>
                            <label class="sun"><input type="checkbox">음영 처리를 위해 태양 사용</label>
                        </div>
                    </div>
                    <div class="scrollbar outer"><svg><use href="#up"/></svg><span class="thumb"></span><svg><use href="#down"/></svg></div>
                </div>
            </aside>
        </main>

        <footer class="statusbar">
            <svg viewBox="0 0 20 20"><circle cx="10" cy="10" r="8.500" fill="#fff" stroke="#aaa"/><path d="M10 4q4 0 3 4l-2 4H9L7 8q-1-4 3-4zM9 13h2v2H9z" fill="#aaa"/></svg>
            <svg viewBox="0 0 20 20"><circle cx="10" cy="10" r="8.500" fill="#fff" stroke="#222" stroke-width="1.500"/><path d="M8 9h4v6H8z" fill="#222"/><circle cx="10" cy="6" r="2" fill="#222"/></svg>
            <svg viewBox="0 0 20 20"><circle cx="10" cy="10" r="8.500" fill="#eee" stroke="#aaa"/><circle cx="10" cy="8" r="3.500" fill="#999"/><path d="M4 16q0-5 6-5t6 5q-6 4-12 0z" fill="#999"/></svg>
            <p>끌어서 보기 각도를 회전시킵니다. Shift = 이동(상하/좌우), Control = 중력 해제.</p>
            <label for="measure">단위</label>
            <input id="measure" type="text">
        </footer>
    </body>
</html>
```
FILE: styles.css
```css
*{
    margin: 0;
    padding: 0;
    box-sizing: border-box;
}
body{
    display: flex;
    flex-direction: column;
    height: 100vh;
    padding: 26px 0;
    background-color: #1b1b1b;
    color: #1f1f24;
    font-family: "Noto Sans CJK KR", "Noto Sans", sans-serif;
    font-size: 16px;
    font-weight: 300;
    line-height: 20px;
    overflow: hidden;
}
button, input, select{
    font: inherit;
    color: inherit;
    border: 0;
    border-radius: 0;
    background: none;
}
.sprite{
    display: none;
}
.icon-text{
    font: 12px "Liberation Serif", serif;
}
.tiny-text{
    font: 8px "Liberation Sans", sans-serif;
}

/* title and menus */
.titlebar{
    display: flex;
    align-items: center;
    height: 28px;
    padding: 0 3px;
    background-color: #fff;
}
.logo{
    width: 18px;
    height: 18px;
    margin-right: 6px;
}
.titlebar h1{
    flex: 1;
    font-family: "Open Sans", "Noto Sans CJK KR", sans-serif;
    font-size: 16px;
    font-weight: 300;
}
.window-buttons{
    display: flex;
}
.window-buttons button{
    width: 58px;
    height: 28px;
}
.window-buttons svg{
    width: 14px;
    height: 14px;
}
.menubar{
    display: flex;
    align-items: center;
    gap: 14px;
    height: 26px;
    padding: 0 7px;
    background-color: #fff;
}
.menubar a{
    color: inherit;
    text-decoration: none;
}

/* toolbars */
.toolbars{
    display: flex;
    height: 46px;
    background-color: #f7f7f7;
    border-bottom: 1px solid #b5b5b5;
}
.toolbar{
    display: flex;
    align-items: center;
    padding-left: 10px;
    border-right: 1px solid #bbb;
    background-color: #faf9fb;
    background-image: radial-gradient(circle at 1px 2px, #bbb 1px, transparent 1px);
    background-size: 4px 4px;
    background-repeat: repeat-y;
    background-position: 4px 0;
}
.toolbar + .toolbar{
    padding: 0 1px 0 11px;
}
.tool{
    display: flex;
    align-items: center;
    justify-content: center;
    width: 42px;
    height: 42px;
}
.tool svg{
    width: 32px;
    height: 32px;
}
.tool.drop{
    width: 64px;
    justify-content: flex-start;
    gap: 7px;
    padding-left: 7px;
}
.tool .caret{
    width: 13px;
    height: 13px;
}
.tool.active{
    background-color: #cfe3f8;
    border: 1px solid #a9cbee;
}
.sep{
    width: 1px;
    height: 38px;
    margin: 0 5px 0 2px;
    background-color: #8c8c8c;
}

/* workspace */
.workspace{
    display: flex;
    flex: 1;
    min-height: 0;
    background-color: #f8f8f8;
}
.palette{
    width: 90px;
    border-right: 2px solid #999;
}
.tools{
    display: grid;
    grid-template-columns: 42px 42px;
    padding: 10px 0 1px 2px;
    border-right: 1px solid #bbb;
    border-bottom: 1px solid #bbb;
    background-color: #faf9fb;
    background-image: radial-gradient(circle at 2px 1px, #bbb 1px, transparent 1px);
    background-size: 4px 4px;
    background-repeat: repeat-x;
    background-position: 0 4px;
}
.tools .sep{
    grid-column: 1 / 3;
    width: auto;
    height: 1px;
    margin: 2px 2px 5px;
}
.viewport{
    position: relative;
    flex: 1;
    border-top: 2px solid #999;
    background-color: #d7d7d5;
}
.scene{
    display: block;
    width: 100%;
    height: 100%;
}
.axis{
    fill: none;
    stroke-width: 1;
    shape-rendering: crispEdges;
}
.green{ stroke: #3fa343; }
.blue{ stroke: #24248c; }
.red{ stroke: #b32531; }
.dark{ stroke: #444; }
.dotted{ stroke-dasharray: 1 3; }
.face{
    fill: #7e838a;
    stroke: #1b1a20;
    stroke-width: 2.5;
}
.face.light{ fill: #c5d4df; }
.face.side{ fill: #727a7e; }
/* pressed key shown over the drawing */
.keycast{
    position: absolute;
    right: 87px;
    bottom: -5px;
    width: 298px;
    height: 56px;
    border: 10px solid rgba(90, 160, 240, .45);
    border-radius: 14px;
    background-color: rgba(110, 110, 110, .22);
    color: #dededc;
    font: 700 28px/34px "DejaVu Sans", sans-serif;
    display: flex;
    justify-content: center;
}

/* tray */
.tray{
    display: flex;
    flex-direction: column;
    width: 303px;
    padding-left: 6px;
}
.tray-title{
    display: flex;
    align-items: center;
    gap: 8px;
    height: 27px;
    padding: 0 4px 1px;
    background-image: linear-gradient(#c8d6e5, #dbe6f4);
}
.tray-title h2{
    flex: 1;
    font-size: 15px;
    font-weight: 300;
}
.tray-title button{
    display: flex;
    align-items: center;
    justify-content: center;
    width: 12px;
    height: 12px;
}
.tray-title svg{
    width: 12px;
    height: 12px;
}
.tray-title .tray-close{
    background-color: #c4616a;
    color: #fff;
}
.tray-body{
    display: flex;
    flex: 1;
    min-height: 0;
}
.panels{
    flex: 1;
    min-width: 0;
    border-right: 1px solid #fff;
}
.panel-head{
    display: flex;
    align-items: center;
    height: 23px;
    margin-bottom: 1px;
    padding: 0 2px 1px 9px;
    border: 1px solid #bbb;
    border-top-color: #ccc;
    background-image: linear-gradient(#f4f4f4, #bebebe);
    font-size: 16px;
    font-weight: 300;
}
.panel-head > svg{
    width: 10px;
    height: 10px;
    margin-right: 8px;
}
.panel-head button{
    display: flex;
    align-items: center;
    justify-content: center;
    width: 16px;
    height: 16px;
    margin-left: auto;
    border: 1px solid #aaa;
    background-color: #eee;
}
.panel-head button svg{
    width: 12px;
    height: 12px;
}
.plain{
    display: flex;
    align-items: center;
    justify-content: center;
}
.plain svg{
    width: 16px;
    height: 16px;
}
.plain .toggle{
    width: 12px;
    height: 18px;
}
.plain .medium{
    width: 22px;
    height: 22px;
}
.sunken{
    border: 1px solid #fff;
    border-top: 2px solid #888;
    border-left: 2px solid #888;
}
.entity{
    display: flex;
    align-items: center;
    justify-content: space-between;
    height: 33px;
    margin: 0 8px 147px 2px;
    padding: 0 0 2px 9px;
    background-image: linear-gradient(#aaa, #aaa);
    background-size: 246px 1px;
    background-position: left bottom;
    background-repeat: no-repeat;
    font-size: 12px;
    font-weight: 500;
}
.material{
    display: flex;
    gap: 4px;
    height: 93px;
    padding: 1px 2px 0;
    border-bottom: 1px solid #aaa;
}
.preview{
    width: 76px;
    height: 86px;
    border: 1px solid #999;
}
.material .sunken{
    width: 162px;
    height: 23px;
    padding: 0 3px;
    color: #888;
    font-size: 12px;
}
.material-side{
    display: flex;
    flex-direction: column;
    align-items: center;
    justify-content: space-between;
    height: 87px;
    margin-left: auto;
    padding-top: 4px;
}
.plain .default-mat{
    width: 26px;
    height: 26px;
}
.tabs{
    display: flex;
    align-items: flex-end;
    height: 30px;
    font-size: 12px;
    font-weight: 400;
}
.tab{
    width: 46px;
    height: 20px;
    padding-right: 14px;
    border-top: 1px solid #e4e4e4;
    border-right: 2px solid #888;
    line-height: 18px;
}
.tab.current{
    width: 50px;
    height: 22px;
}
.dropper{
    align-self: center;
    margin: 0 4px 0 auto;
}
.browse{
    display: flex;
    align-items: center;
    gap: 10px;
    height: 36px;
    padding: 0 6px 2px 10px;
    border-bottom: 1px solid #999;
}
.plain .home{
    width: 20px;
    height: 20px;
}
.dropdown{
    display: flex;
    flex: 1;
    height: 27px;
    background-color: #fff;
    box-shadow: inset -1px -1px #888;
    font-family: "Noto Sans", "Noto Sans CJK KR", sans-serif;
    font-size: 13px;
    font-weight: 400;
}
.browse .dropdown{
    margin: 0 -2px 0 -4px;
    font-size: 12px;
}
.dropdown select{
    flex: 1;
    min-width: 0;
    padding-left: 3px;
    appearance: none;
}
.raised{
    width: 20px;
    height: 100%;
    padding: 3px;
    border-right: 2px solid #777;
    border-bottom: 2px solid #777;
    background-color: #f8f8f8;
}
.colors{
    display: flex;
    height: 177px;
    margin-bottom: 3px;
    border-bottom: 2px solid #888;
}
.swatches{
    display: grid;
    grid-template-columns: repeat(3, 62px);
    grid-auto-rows: 62px;
    align-content: start;
    gap: 2px;
    flex: 1;
    height: 173px;
    padding: 2px 3px 0;
    overflow: hidden;
    background-color: #fff;
}
.swatch{
    border: 1px solid #aaa;
    padding: 1px;
    background-clip: content-box;
}
.c1{ background-color: #ffd5d5; }
.c2{ background-color: #fda7a7; }
.c3{ background-color: #f87878; }
.c4{ background-color: #f54c4c; }
.c5{ background-color: #f12022; }
.c6{ background-color: #d81618; }
.c7{ background-color: #a91719; }
.c8{ background-color: #7b191b; }
.c9{ background-color: #fee0d6; }
.scrollbar{
    display: flex;
    flex-direction: column;
    align-items: center;
    width: 20px;
    height: 173px;
    background-color: #f8f8f8;
}
.scrollbar svg{
    width: 12px;
    height: 12px;
    margin: 5px 0 4px;
}
.scrollbar .thumb{
    width: 19px;
    height: 21px;
    margin-bottom: auto;
    background-color: #d6d6d6;
}
.scrollbar.outer{
    height: auto;
}

/* shadow settings */
.shadows{
    padding: 0 1px 0 4px;
    font-size: 12px;
    font-weight: 400;
}
.shadow-row{
    display: grid;
    grid-template-columns: 41px 122px 82px;
    column-gap: 8px;
    height: 35px;
}
.shadow-row .dropdown,
.shadow-row .spin{
    margin-left: 8px;
    width: 82px;
}
.shadow-row > label{
    line-height: 18px;
}
.zone{
    grid-template-columns: 41px 127px 1fr;
    height: 41px;
    padding-top: 5px;
}
.zone .dropdown{
    width: 127px;
    height: 24px;
    margin-left: 0;
}
.zone .plain{
    align-self: start;
    justify-self: start;
    padding: 2px 6px;
}
.zone .plain:last-child{
    justify-self: end;
    padding: 4px 6px;
}
.plain .cube{
    width: 24px;
    height: 24px;
}
.track{
    width: 122px;
}
.track input{
    display: block;
    width: 100%;
    height: 9px;
    appearance: none;
}
.track input::-webkit-slider-runnable-track{
    height: 9px;
    border-top: 2px solid #999;
    border-left: 1px solid #999;
    background-image: linear-gradient(90deg, #222, #f8f8f8);
}
.track input::-webkit-slider-thumb{
    appearance: none;
    width: 5px;
    height: 14px;
    margin-top: -2px;
    border-right: 1px solid #777;
    border-bottom: 1px solid #777;
    background-color: #f8f8f8;
}
.track .time::-webkit-slider-runnable-track{
    background-image: linear-gradient(90deg, #fff, #a9c9e2 30%, #6f84ea 65%, #222236);
}
.track .date::-webkit-slider-runnable-track{
    background-image: linear-gradient(90deg, #fff, #f6c545 33%, #e62a2a 66%, #fff);
}
.level{
    height: 36px;
}
.level > label{
    line-height: 22px;
}
.level .track{
    padding-top: 6px;
}
.ticks{
    display: flex;
    justify-content: space-between;
    margin-top: 1px;
    font: 500 10px/12px "Noto Sans", "Noto Sans CJK KR", sans-serif;
}
.months{
    padding: 0 2px;
    font: 700 10px/12px "Liberation Sans", sans-serif;
}
.spin{
    display: grid;
    grid-template-columns: 1fr 20px;
    grid-template-rows: 12px 12px;
    height: 27px;
    background-color: #fff;
    font-family: "Noto Sans", "Noto Sans CJK KR", sans-serif;
    font-size: 13px;
}
.spin input{
    grid-row: 1 / 3;
    min-width: 0;
    width: 100%;
    padding-left: 2px;
}
.spin button{
    display: flex;
    align-items: center;
    justify-content: center;
    border: 1px solid #ccc;
    border-right: 2px solid #888;
    border-bottom: 1px solid #777;
    background-color: #f8f8f8;
}
.spin svg{
    width: 12px;
    height: 12px;
}
.shadows hr{
    margin-bottom: 10px;
    border: 0;
    border-top: 1px solid #999;
}
.sun{
    display: flex;
    align-items: center;
    gap: 7px;
    margin-left: 70px;
}
.sun input{
    appearance: none;
    width: 15px;
    height: 15px;
    border: 1px solid #ccc;
    border-top: 2px solid #888;
    border-left: 2px solid #888;
    background-color: #fff;
}

/* status bar */
.statusbar{
    display: flex;
    align-items: center;
    height: 32px;
    padding: 1px 5px 0 6px;
    background-color: #f8f8f8;
}
.statusbar svg{
    width: 20px;
    height: 20px;
    margin-right: 15px;
}
.statusbar p{
    flex: 1;
    margin: 0 11px 0 -3px;
    padding-left: 10px;
    border-left: 1px solid #999;
    border-right: 1px solid #999;
    line-height: 14px;
}
.statusbar label{
    font-size: 17px;
}
.statusbar input{
    width: 250px;
    height: 24px;
    margin-left: 9px;
    border: 1px solid #b9c3d8;
}
```
